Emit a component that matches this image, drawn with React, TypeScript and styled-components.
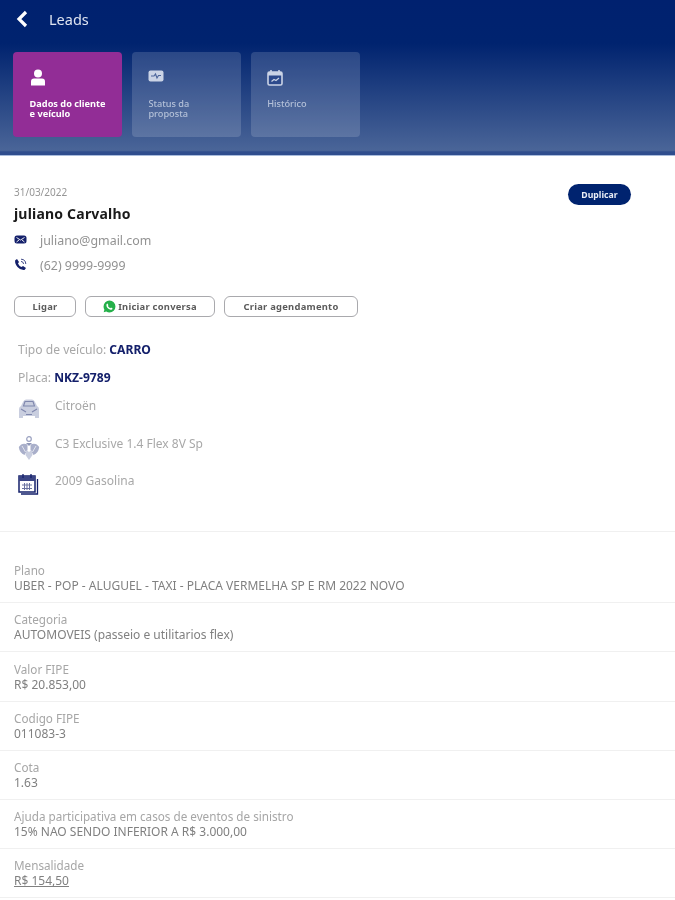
import React from "react";
import styled, { createGlobalStyle } from "styled-components";

const Global = createGlobalStyle`
  html, body { margin: 0; padding: 0; background: #fff; }
  body { font-family: "Noto Sans", "Open Sans", "Liberation Sans", sans-serif; }
  * { box-sizing: border-box; }
`;

const Page = styled.div`
  width: 675px;
  height: 900px;
  overflow: hidden;
  background: #fff;
  filter: blur(0.4px);
`;

const Header = styled.header`
  height: 156px;
  padding: 0 14px 0 13px;
  background: linear-gradient(180deg, #00216f 0%, #00236f 28%, #4a6598 97%, #2f4d8d 98%);
  border-bottom: 1px solid #a9bcdc;
`;

const TopBar = styled.div`
  height: 52px;
  padding: 0 0 15px 2px;
  display: flex;
  align-items: center;
  gap: 20px;
`;

const BackIcon = styled.svg`
  width: 14px;
  height: 18px;
  display: block;
`;

const Title = styled.h1`
  margin: 0;
  font-size: 14.5px;
  font-weight: 400;
  color: #dfe5f1;
`;

const Tabs = styled.div`
  display: flex;
  gap: 9.4px;
`;

const Tab = styled.div<{ $active?: boolean }>`
  width: 109.4px;
  height: 85px;
  padding: 17px 16px 0 16.6px;
  border-radius: 4px;
  background: ${(p) => (p.$active ? "#922d96" : "rgba(255,255,255,0.15)")};
  color: ${(p) => (p.$active ? "#fff" : "#b4c0d8")};
`;

const TabIcon = styled.svg`
  width: 16px;
  height: 17px;
  display: block;
  margin-bottom: 13px;
`;

const TabLabel = styled.div<{ $bold?: boolean }>`
  font-size: 9.2px;
  line-height: 10px;
  font-weight: ${(p) => (p.$bold ? 700 : 500)};
`;

const Client = styled.section`
  padding: 30px 44px 0 14px;
`;

const DateRow = styled.div`
  display: flex;
  justify-content: space-between;
  align-items: flex-start;
  height: 18px;
`;

const DateText = styled.span`
  font-size: 10px;
  line-height: 13px;
  color: #969696;
`;

const Duplicate = styled.button`
  width: 63px;
  height: 21px;
  margin-top: -2px;
  border: 0;
  padding: 0;
  border-radius: 11px;
  background: #00236f;
  color: #e8ecf5;
  font: 700 8.7px "Noto Sans", sans-serif;
`;

const Name = styled.div`
  font-size: 14px;
  line-height: 20px;
  font-weight: 700;
  color: #1a1a1a;
  letter-spacing: 0.2px;
`;

const ContactList = styled.div`
  margin-top: 4px;
`;

const ContactRow = styled.div`
  display: flex;
  align-items: center;
  gap: 13px;
  height: 25px;
  font-size: 12.4px;
  color: #929292;
`;

const ContactIcon = styled.svg`
  width: 13px;
  height: 13px;
  display: block;
  flex: none;
  margin-top: -3px;
`;

const Actions = styled.div`
  display: flex;
  gap: 9px;
  margin-top: 18px;
`;

const ActionButton = styled.button<{ $w: number }>`
  width: ${(p) => p.$w}px;
  height: 21px;
  padding: 0;
  border: 1px solid #a9a9ad;
  border-radius: 6px;
  background: #fff;
  color: #5b5b5b;
  font: 700 9.4px "Noto Sans", sans-serif;
  letter-spacing: 0.25px;
  display: flex;
  align-items: center;
  justify-content: center;
  gap: 2px;
`;

const WhatsIcon = styled.svg`
  width: 13px;
  height: 13px;
  display: block;
`;

const Vehicle = styled.section`
  padding: 25px 0 0 18px;
  height: 215px;
  border-bottom: 1px solid #f0f0f0;
`;

const Fact = styled.div`
  font-size: 12.1px;
  line-height: 16px;
  height: 28px;
  color: #a8a8a8;
`;

const FactValue = styled.strong`
  color: #14206b;
  font-weight: 700;
`;

const Spec = styled.div`
  display: flex;
  align-items: flex-start;
  gap: 15px;
  height: 37.5px;
  font-size: 12px;
  line-height: 16px;
  color: #a8a8a8;
`;

const SpecIcon = styled.svg`
  width: 22px;
  height: 25px;
  display: block;
  flex: none;
`;

const Details = styled.section`
  padding-top: 22px;
`;

const Row = styled.div`
  height: 49.2px;
  padding: 0 14px 9px;
  border-bottom: 1px solid #f0f0f0;
  display: flex;
  flex-direction: column;
  justify-content: flex-end;
`;

const RowLabel = styled.div`
  font-size: 11.7px;
  line-height: 15px;
  color: #a6a6a6;
`;

const RowValue = styled.div<{ $u?: boolean }>`
  font-size: 12px;
  line-height: 15px;
  color: #808080;
  text-decoration: ${(p) => (p.$u ? "underline" : "none")};
`;

const rows: [string, string, boolean?][] = [
  ["Plano", "UBER - POP - ALUGUEL - TAXI - PLACA VERMELHA SP E RM 2022 NOVO"],
  ["Categoria", "AUTOMOVEIS (passeio e utilitarios flex)"],
  ["Valor FIPE", "R$ 20.853,00"],
  ["Codigo FIPE", "011083-3"],
  ["Cota", "1.63"],
  ["Ajuda participativa em casos de eventos de sinistro", "15% NAO SENDO INFERIOR A R$ 3.000,00"],
  ["Mensalidade", "R$ 154,50", true],
];

export default function App() {
  return (
    <Page>
      <Global />
      <Header>
        <TopBar>
          <BackIcon viewBox="0 0 14 18">
            <path d="M11 2 L4 9 L11 16" fill="none" stroke="#fff" strokeWidth="3.2" />
          </BackIcon>
          <Title>Leads</Title>
        </TopBar>
        <Tabs>
          <Tab $active>
            <TabIcon viewBox="0 0 16 17">
              <circle cx="8" cy="4.5" r="4" fill="#fff" />
              <path d="M1 16.5 V12.5 Q1 9.5 4 9.5 H12 Q15 9.5 15 12.5 V16.5 Z" fill="#fff" />
            </TabIcon>
            <TabLabel $bold>Dados do cliente<br />e veículo</TabLabel>
          </Tab>
          <Tab>
            <TabIcon viewBox="0 0 16 17">
              <rect x="0.5" y="1.5" width="15" height="11" rx="2" fill="#cbd4e6" />
              <path d="M3 7 H6 L7.5 5 L9 9 L10.5 6.5 H13" fill="none" stroke="#4c659b" strokeWidth="1.1" />
            </TabIcon>
            <TabLabel>Status da<br />proposta</TabLabel>
          </Tab>
          <Tab>
            <TabIcon viewBox="0 0 16 17">
              <rect x="1" y="3" width="14" height="13" rx="1.5" fill="#2d4a8c" stroke="#cbd4e6" strokeWidth="1.6" />
              <rect x="1" y="3" width="14" height="3.5" fill="#cbd4e6" />
              <path d="M4 1 V4 M12 1 V4" stroke="#cbd4e6" strokeWidth="1.6" />
              <path d="M4.5 12.5 L7 10.5 L9 11.5 L12 9" fill="none" stroke="#cbd4e6" strokeWidth="1.2" />
            </TabIcon>
            <TabLabel>Histórico</TabLabel>
          </Tab>
        </Tabs>
      </Header>
      <Client>
        <DateRow>
          <DateText>31/03/2022</DateText>
          <Duplicate>Duplicar</Duplicate>
        </DateRow>
        <Name>juliano Carvalho</Name>
        <ContactList>
          <ContactRow>
            <ContactIcon viewBox="0 0 13 13">
              <rect x="0.5" y="2.5" width="12" height="8" rx="2.5" fill="#14206b" />
              <path d="M2.5 4.5 L6.5 7 L10.5 4.5 M2.5 9 L5 7 M10.5 9 L8 7" fill="none" stroke="#fff" strokeWidth="0.9" />
            </ContactIcon>
            juliano@gmail.com
          </ContactRow>
          <ContactRow>
            <ContactIcon viewBox="0 0 13 13">
              <path d="M3 1 L5 4 L4 5.5 Q5 8 7.5 9 L9 8 L12 10 L10.5 12 Q6.5 12.5 3.5 9 Q0.5 5.5 1.2 2.2 Z" fill="#14206b" />
              <path d="M7 1.2 A5 5 0 0 1 11.8 6 M7 3.4 A2.8 2.8 0 0 1 9.6 6" fill="none" stroke="#14206b" strokeWidth="0.8" />
            </ContactIcon>
            (62) 9999-9999
          </ContactRow>
        </ContactList>
        <Actions>
          <ActionButton $w={62}>Ligar</ActionButton>
          <ActionButton $w={130}>
            <WhatsIcon viewBox="0 0 12 12">
              <path d="M6 .5 A5.5 5.5 0 0 1 6 11.5 Q4.4 11.5 3 10.7 L.6 11.4 L1.3 9 Q.5 7.6 .5 6 A5.5 5.5 0 0 1 6 .5 Z" fill="#25b04a" />
              <path d="M4.2 3.2 L5 4.8 L4.5 5.5 Q5.3 6.9 6.7 7.5 L7.4 6.9 L8.9 7.8 Q8.4 9.2 7 8.9 Q3.3 8 3.1 4.6 Q3.2 3.5 4.2 3.2 Z" fill="#fff" />
            </WhatsIcon>
            Iniciar conversa
          </ActionButton>
          <ActionButton $w={134}>Criar agendamento</ActionButton>
        </Actions>
      </Client>
      <Vehicle>
        <Fact>Tipo de veículo: <FactValue>CARRO</FactValue></Fact>
        <Fact>Placa: <FactValue>NKZ-9789</FactValue></Fact>
        <Spec>
          <SpecIcon viewBox="0 0 22 25">
            <path d="M5 4 Q6 1.500 8 1.500 H14 Q16 1.500 17 4 L19 8 Q21 9 21 11 V20 H17 V18 H5 V20 H1 V11 Q1 9 3 8 Z" fill="#c9cedf" />
            <path d="M5.500 8 L7 3.500 H15 L16.500 8 Z M3 11 L8 14 M19 11 L14 14 M8 16.500 H14" fill="none" stroke="#7f87ad" strokeWidth="1.1" />
          </SpecIcon>
          Citroën
        </Spec>
        <Spec>
          <SpecIcon viewBox="0 0 22 25">
            <circle cx="11" cy="3" r="2.300" fill="none" stroke="#9aa1c0" strokeWidth="1.2" />
            <path d="M8 7 H14 L11 10 Z" fill="#8f97b8" />
            <path d="M9.500 8.500 Q4 6 .8 11 Q1.500 17 6.500 19 L9.500 14 Z" fill="#a9afca" />
            <path d="M12.500 8.500 Q18 6 21.200 11 Q20.500 17 15.500 19 L12.500 14 Z" fill="#a9afca" />
            <path d="M8.500 14 L11 16 L13.500 14 L14.500 19 L11 24 L7.500 19 Z" fill="#c9cedf" />
            <path d="M4 10 L7.500 16 M18 10 L14.500 16" stroke="#e4e6ef" strokeWidth="1" />
          </SpecIcon>
          C3 Exclusive 1.4 Flex 8V Sp
        </Spec>
        <Spec>
          <SpecIcon viewBox="0 0 22 25">
            <rect x="1" y="3" width="16" height="16" fill="none" stroke="#14206b" strokeWidth="1.5" />
            <rect x="1" y="3" width="16" height="5" fill="#3b4585" />
            <path d="M5 1 V5 M13 1 V5 M19.500 6 V21 H3" fill="none" stroke="#14206b" strokeWidth="1.300" />
            <path d="M4 12 H14 M4 15.500 H14 M6.500 10 V17 M9 10 V17 M11.500 10 V17" stroke="#6a72a0" strokeWidth="1" />
          </SpecIcon>
          2009 Gasolina
        </Spec>
      </Vehicle>
      <Details>
        {rows.map(([label, value, u]) => (
          <Row key={label}>
            <RowLabel>{label}</RowLabel>
            <RowValue $u={u}>{value}</RowValue>
          </Row>
        ))}
      </Details>
    </Page>
  );
}
